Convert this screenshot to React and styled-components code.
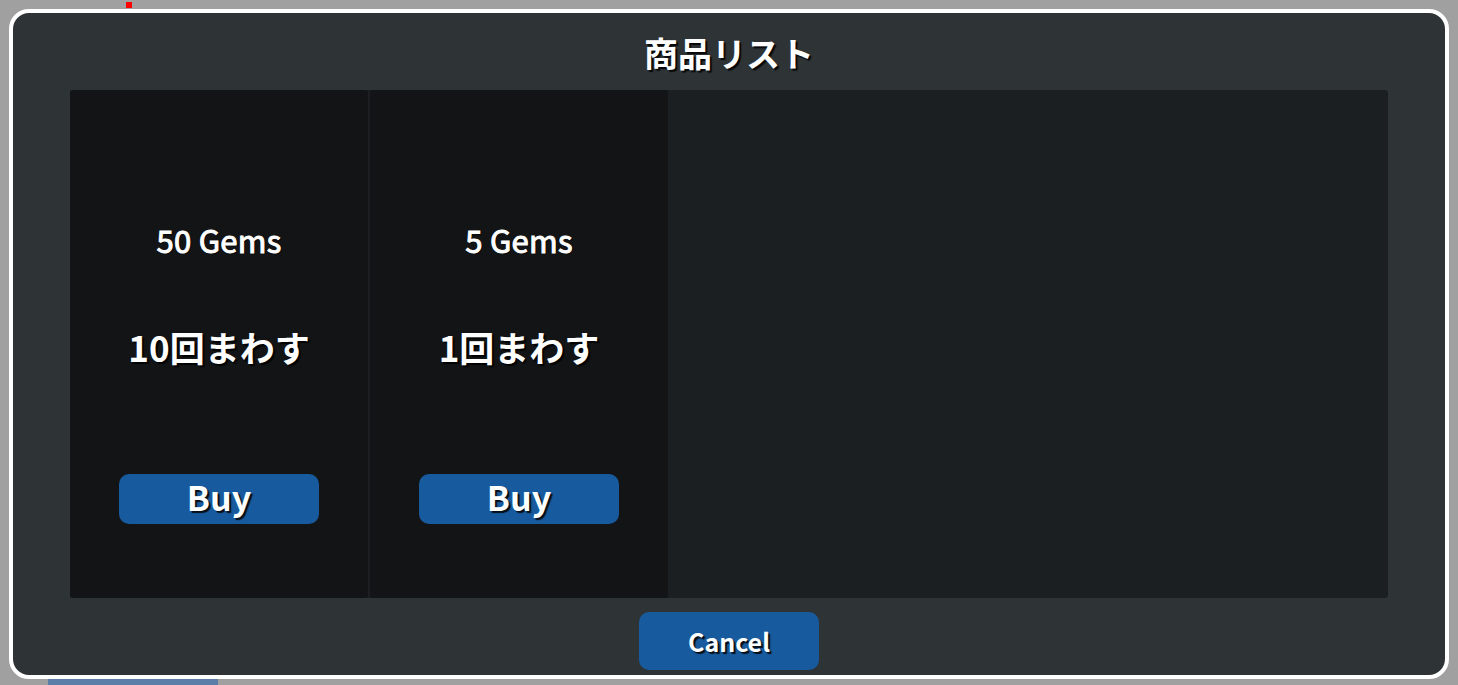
import React from "react";
import styled, { createGlobalStyle } from "styled-components";

const Global = createGlobalStyle`
  html, body { margin: 0; padding: 0; background: #a0a0a0; overflow: hidden; }
  body { font-family: "Noto Sans CJK JP", "Noto Sans", sans-serif; }
`;

const Stage = styled.div`
  position: relative;
  width: 1458px;
  height: 685px;
  padding: 9px;
  box-sizing: border-box;
  background: #a0a0a0;
`;

const Marker = styled.div`
  position: absolute;
  left: 126px;
  top: 2px;
  width: 6px;
  height: 6px;
  background: #ff0000;
`;

const BehindButton = styled.div`
  position: absolute;
  left: 48px;
  top: 672px;
  width: 170px;
  height: 30px;
  border-radius: 8px;
  background: #5a7ea8;
`;

const Frame = styled.div`
  position: relative;
  z-index: 1;
  width: 1440px;
  height: 670px;
  box-sizing: border-box;
  border: 4px solid #ffffff;
  border-radius: 20px;
  background: #2e3336;
  display: flex;
  flex-direction: column;
  align-items: center;
  padding: 0 57px 5px;
`;

const Title = styled.div`
  height: 77px;
  display: flex;
  align-items: center;
  justify-content: center;
  color: #ffffff;
  font-size: 34px;
  font-weight: 700;
  text-shadow: 2px 2px 1px rgba(0, 0, 0, 0.85);
  padding-top: 2px;
  box-sizing: border-box;
`;

const Panel = styled.div`
  align-self: stretch;
  height: 508px;
  background: #1c1f22;
  border-radius: 3px;
  display: flex;
  gap: 2px;
`;

const Card = styled.div`
  width: 298px;
  height: 100%;
  background: #131416;
  border-radius: 3px;
  display: flex;
  flex-direction: column;
  align-items: center;
  padding-top: 130px;
  box-sizing: border-box;
`;

const Price = styled.div`
  height: 40px;
  line-height: 40px;
  color: #ffffff;
  font-size: 31px;
  font-weight: 400;
  -webkit-text-stroke: 1px #ffffff;
  letter-spacing: 0.3px;
  text-shadow: 1px 1px 1px rgba(0, 0, 0, 0.9);
`;

const Spins = styled.div`
  margin-top: 65px;
  height: 44px;
  line-height: 44px;
  color: #ffffff;
  font-size: 35px;
  font-weight: 700;
  text-shadow: 2px 2px 1px rgba(0, 0, 0, 0.9);
`;

const BlueButton = styled.button`
  border: none;
  margin: 0;
  padding: 0;
  background: #185a9e;
  color: #ffffff;
  font-family: "Noto Sans CJK JP", "Noto Sans", sans-serif;
  font-weight: 700;
  display: flex;
  align-items: center;
  justify-content: center;
  cursor: pointer;
`;

const BuyButton = styled(BlueButton)`
  margin-top: 105px;
  width: 200px;
  height: 50px;
  border-radius: 10px;
  font-size: 34px;
  text-shadow: 2px 2px 1px rgba(0, 0, 0, 0.85);
  padding-bottom: 6px;
`;

const CancelButton = styled(BlueButton)`
  margin-top: 14px;
  width: 180px;
  height: 58px;
  border-radius: 10px;
  font-size: 25px;
  text-shadow: 2px 2px 1px rgba(0, 0, 0, 0.85);
`;

const products = [
  { price: "50 Gems", spins: "10回まわす" },
  { price: "5 Gems", spins: "1回まわす" },
];

export default function App() {
  return (
    <>
      <Global />
      <Stage>
        <Marker />
        <BehindButton />
        <Frame>
          <Title>商品リスト</Title>
          <Panel>
            {products.map((p) => (
              <Card key={p.price}>
                <Price>{p.price}</Price>
                <Spins>{p.spins}</Spins>
                <BuyButton>Buy</BuyButton>
              </Card>
            ))}
          </Panel>
          <CancelButton>Cancel</CancelButton>
        </Frame>
      </Stage>
    </>
  );
}
